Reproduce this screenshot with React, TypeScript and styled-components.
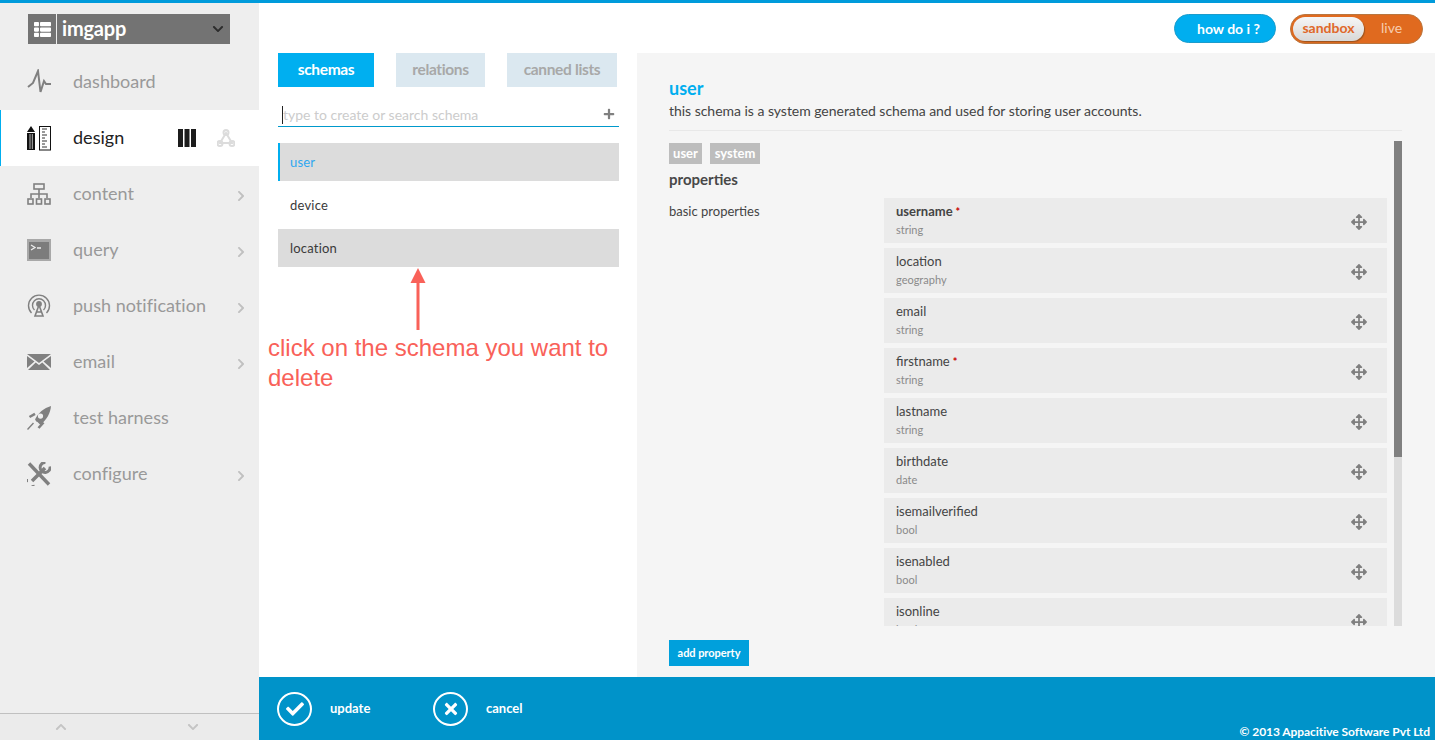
import React from "react";
import styled, { createGlobalStyle } from "styled-components";
import { FaThList, FaChevronDown, FaChevronRight, FaChevronUp, FaPlus, FaArrowsAlt, FaCheck, FaTimes } from "react-icons/fa";

const Global = createGlobalStyle`
  html, body { margin: 0; padding: 0; background: #fff; }
  * { box-sizing: border-box; }
  body { font-family: Lato, "Open Sans", sans-serif; }
`;

const Page = styled.div`
  width: 1435px; height: 740px; overflow: hidden;
  display: flex; flex-direction: column;
  border-top: 3px solid #009bdb;
`;
const Body = styled.div`flex: 1; display: flex; min-height: 0;`;

const Sidebar = styled.aside`
  width: 259px; background: #eeeeee; display: flex; flex-direction: column;
  padding-top: 11px;
`;
const AppSwitch = styled.div`
  margin-left: 28px; width: 202px; height: 30px; background: #737373; display: flex; align-items: center; color: #fff;
  flex: none;
`;
const AppIcon = styled.div`
  width: 29px; height: 100%; display: flex; align-items: center; justify-content: center; font-size: 17px;
  border-right: 1px solid #eee;
`;
const AppName = styled.div`flex: 1; padding: 0 0 2px 5px; font-size: 20px; font-weight: 700; line-height: 26px; letter-spacing: -0.2px;`;
const AppCaret = styled.div`width: 18px; color: #2c2c2c; font-size: 12px; display: flex; align-items: center;`;

const Nav = styled.nav`flex: 1; padding-top: 10px;`;
const NavRow = styled.div<{ $active?: boolean }>`
  height: 56px; display: flex; align-items: center; position: relative;
  padding-left: ${p => (p.$active ? 26 : 27)}px;
  background: ${p => (p.$active ? "#fff" : "transparent")};
  border-left: ${p => (p.$active ? "1px solid #00aeef" : "none")};
  color: ${p => (p.$active ? "#222" : "#999")};
`;
const NavIcon = styled.div`
  width: 24px; height: 26px; flex: none; display: flex; align-items: center; justify-content: center;
`;
const NavLabel = styled.div`flex: 1; margin-left: 22px; padding-bottom: 2px; font-size: 18px; line-height: 24px; letter-spacing: 0.03px;`;
const NavArrow = styled.div`width: 24px; flex: none; color: #c0c0c0; font-size: 12px; display: flex; padding-top: 4px;`;
const DesignTools = styled.div`display: flex; align-items: center; gap: 21px; margin-right: 24px;`;

const SideFoot = styled.div`
  height: 27px; border-top: 1px solid #c0c0c0; background: #ebebeb; flex: none;
  display: grid; grid-template-columns: 122px 142px; color: #c4c4c4; font-size: 12px;
  align-items: center; justify-items: center;
`;

const Main = styled.main`flex: 1; display: flex; flex-direction: column; min-width: 0;`;
const TopBar = styled.header`
  height: 50px; flex: none; display: flex; justify-content: flex-end; align-items: flex-start;
  padding: 11px 12px 0 0; gap: 14px;
`;
const HelpPill = styled.div`
  width: 102px; height: 29px; border-radius: 15px; background: #00aeef; border: 1px solid #1b9ccc;
  color: #fff; font-weight: 700; font-size: 14px; line-height: 27px; padding-left: 22px;
`;
const EnvToggle = styled.div`
  width: 133px; height: 30px; border-radius: 15px; background: #e06a1f; border: 1px solid #b9763f;
  display: flex; align-items: center; padding-left: 2px;
`;
const EnvKnob = styled.div`
  width: 71px; height: 24px; border-radius: 12px; background: linear-gradient(#f6f6f6, #d8d8d8);
  box-shadow: 1px 1px 1px #9a5420;
  color: #e0682a; font-weight: 700; font-size: 14px; line-height: 22px; text-align: center;
`;
const EnvOff = styled.div`margin-left: 17px; padding-bottom: 3px; color: #f7cdb0; font-size: 14px;`;

const Content = styled.div`flex: 1; display: flex; min-height: 0;`;
const LeftCol = styled.section`width: 378px; padding-left: 19px; position: relative; flex: none;`;
const Tabs = styled.div`display: flex; gap: 22px;`;
const Tab = styled.div<{ $active?: boolean; $w: number }>`
  width: ${p => p.$w}px; height: 34px; text-align: center; line-height: 33px;
  font-size: 15.5px; font-weight: 700; letter-spacing: -0.35px;
  background: ${p => (p.$active ? "#00aff0" : "#dbe8f0")};
  color: ${p => (p.$active ? "#fff" : "#a8a8a8")};
`;
const SearchBox = styled.div`
  margin-top: 17px; width: 341px; height: 23px; position: relative; display: flex; align-items: center;
  border-bottom: 1px solid #0099cc;
`;
const SearchInput = styled.input`
  flex: 1; border: 0; outline: 0; background: transparent; padding: 0 0 2px 5px; height: 22px; min-width: 0;
  font-family: Lato, sans-serif; font-size: 14px; color: #333;
  &::placeholder { color: #cccccc; opacity: 1; }
`;
const Caret = styled.span`position: absolute; left: 4px; top: 2px; width: 1px; height: 18px; background: #222;`;
const PlusBtn = styled.div`color: #808080; font-size: 12px; width: 16px; padding-bottom: 2px; display: flex;`;
const SchemaList = styled.div`margin-top: 16px; width: 341px; display: flex; flex-direction: column; gap: 5px;`;
const SchemaRow = styled.div<{ $shade?: boolean; $active?: boolean }>`
  height: 38px; line-height: 38px; font-size: 13px; letter-spacing: 0.2px; padding-left: ${p => (p.$active ? 10 : 12)}px;
  background: ${p => (p.$shade ? "#dcdcdc" : "transparent")};
  color: ${p => (p.$active ? "#2ea7f0" : "#3a3a3a")};
  border-left: ${p => (p.$active ? "2px solid #00aeef" : "none")};
`;
const Callout = styled.div`position: absolute; left: 9px; top: 215px; width: 350px;`;
const CalloutArrow = styled.div`position: absolute; left: 142px; top: 0; width: 16px; height: 62px;`;
const CalloutText = styled.div`
  margin-top: 65px; font-family: "Liberation Sans", Arial, sans-serif; font-size: 24px; line-height: 30px; color: #f96159;
`;

const Panel = styled.section`flex: 1; background: #f5f5f5; padding: 23px 33px 11px 32px; display: flex; flex-direction: column; min-width: 0;`;
const PanelTitle = styled.h1`margin: 0; font-size: 18px; line-height: 24px; font-weight: 700; color: #00aeef;`;
const PanelDesc = styled.p`margin: 1px 0 0; font-size: 14px; line-height: 20px; color: #444; letter-spacing: -0.03px;`;
const Rule = styled.div`height: 1px; background: #e8e8e8; margin-top: 9px; flex: none;`;
const ScrollArea = styled.div`height: 485px; margin-top: 10px; display: flex; gap: 7px; overflow: hidden; flex: none;`;
const ScrollInner = styled.div`flex: 1; padding-top: 2px; min-width: 0;`;
const Track = styled.div`width: 8px; background: #dcdcdc; flex: none;`;
const Thumb = styled.div`height: 316px; background: #808080;`;
const Chips = styled.div`display: flex; gap: 8px;`;
const Chip = styled.span<{ $w: number }>`
  width: ${p => p.$w}px; height: 21px; line-height: 21px; text-align: center; background: #bdbdbd; color: #fff; font-weight: 700; font-size: 13px;
`;
const SectionHead = styled.h2`margin: 3px 0 0; font-size: 15px; line-height: 24px; font-weight: 700; color: #484848;`;
const PropsGrid = styled.div`display: flex; margin-top: 7px;`;
const PropsLabel = styled.div`width: 215px; flex: none; font-size: 13px; line-height: 26px; color: #444;`;
const PropsList = styled.div`width: 503px; display: flex; flex-direction: column; gap: 5px;`;
const PropRow = styled.div`
  height: 45px; background: #ebebeb; padding: 4px 20px 0 12px; display: flex; align-items: center; flex: none;
`;
const PropText = styled.div`flex: 1; align-self: flex-start;`;
const PropName = styled.div<{ $bold?: boolean }>`font-size: 13px; line-height: 19px; color: #444; font-weight: ${p => (p.$bold ? 700 : 400)};`;
const Req = styled.span`color: #c80000; font-size: 11px; font-weight: 700; line-height: 0; margin-left: 3px;`;
const PropType = styled.div`font-size: 11px; line-height: 16px; margin-top: 1px; color: #8a8a8a;`;
const MoveHandle = styled.div`color: #7f7f7f; font-size: 16px; display: flex; margin-top: -1px;`;
const AddBtn = styled.button`
  margin-top: 14px; width: 80px; height: 26px; border: 0; background: #00a0dc; color: #fff; font-family: Lato, sans-serif;
  font-size: 11px; font-weight: 700; padding: 0 0 2px; flex: none; letter-spacing: -0.05px;
`;

const Footer = styled.footer`
  height: 63px; flex: none; background: #0093c9; color: #fff; display: flex; align-items: center; padding-left: 18px; position: relative;
`;
const FootAction = styled.div<{ $w: number }>`width: ${p => p.$w}px; display: flex; align-items: center; gap: 18px; font-size: 13px; font-weight: 700; margin-top: 1px;`;
const FootLabel = styled.span`padding-bottom: 3px;`;
const Circle = styled.div`
  width: 35px; height: 34px; border-radius: 50%; border: 2px solid #fff; display: flex; align-items: center; justify-content: center; font-size: 18px;
`;
const Copyright = styled.div`position: absolute; right: 5px; bottom: 1px; font-size: 12px; font-weight: 700; letter-spacing: -0.06px;`;

const Pulse = () => (
  <svg width="24" height="26" viewBox="0 0 24 26" fill="none" stroke="#808080" strokeWidth="2">
    <path d="M1 18 L6 14 L11 2 L13.5 23 L17 12 L19 15 L24 15" />
  </svg>
);
const DesignIcon = () => (
  <svg width="24" height="25" viewBox="0 0 24 25">
    <path d="M4 0 L8 6 L0 6 Z M0 7 H8 V24 H0 Z" fill="#111" />
    <path d="M3 8 V23 M5.3 8 V23" stroke="#fff" strokeWidth="0.7" />
    <rect x="12.5" y="0.5" width="11" height="23.5" fill="#fff" stroke="#111" />
    <path d="M15 3 H20 M15 6 H18 M15 9 H20 M15 12 H18 M15 15 H20 M15 18 H18 M15 21 H20" stroke="#333" strokeWidth="1" />
  </svg>
);
const Bars = () => (
  <svg width="18" height="18" viewBox="0 0 18 18" fill="#1c1c1c">
    <rect x="0" width="5" height="18" /><rect x="6.5" width="5" height="18" /><rect x="13" width="5" height="18" />
  </svg>
);
const Graph = () => (
  <svg width="18" height="18" viewBox="0 0 18 18" fill="none" stroke="#dcdcdc" strokeWidth="2">
    <path d="M9 4 L3 14 H15 Z" /><circle cx="9" cy="3.5" r="2.5" /><circle cx="3" cy="14.5" r="2.5" /><circle cx="15" cy="14.5" r="2.5" />
  </svg>
);
const Tree = () => (
  <svg width="24" height="23" viewBox="0 0 24 23" fill="none" stroke="#808080" strokeWidth="1.6">
    <rect x="7" y="1" width="10" height="5" /><path d="M12 6 V15 M4 15 V11 H20 V15" />
    <rect x="1" y="16" width="5" height="5" /><rect x="9.5" y="16" width="5" height="5" /><rect x="18" y="16" width="5" height="5" />
  </svg>
);
const Terminal = () => (
  <svg width="24" height="22" viewBox="0 0 24 22">
    <rect x="0" y="0" width="24" height="22" fill="#a8a8a8" />
    <rect x="2" y="3" width="20" height="17" fill="#7c7c7c" />
    <path d="M4 6 L8 8.5 L4 11" fill="none" stroke="#eee" strokeWidth="1.3" /><path d="M10 9 H14" stroke="#eee" strokeWidth="1.5" />
  </svg>
);
const Antenna = () => (
  <svg width="24" height="24" viewBox="0 0 24 24" fill="none" stroke="#808080" strokeWidth="1.4">
    <path d="M4.5 19 A10.5 10.5 0 1 1 19.5 19" /><path d="M7.5 16 A6.5 6.5 0 1 1 16.5 16" />
    <circle cx="12" cy="10" r="2.2" fill="#808080" /><path d="M12 11 L8 22 H16 Z M9.5 18 H14.5" strokeWidth="1.6" />
  </svg>
);
const Envelope = () => (
  <svg width="24" height="16" viewBox="0 0 24 16" fill="#808080">
    <path d="M0 0 H24 L12 9 Z" /><path d="M0 2 L7.5 7.5 L0 14 Z M24 2 L16.5 7.5 L24 14 Z" /><path d="M1 16 L8.7 8.6 L12 11 L15.3 8.6 L23 16 Z" />
  </svg>
);
const Rocket = () => (
  <svg width="24" height="25" viewBox="0 0 24 25" fill="none">
    <path fillRule="evenodd" fill="#808080" d="M24 0 C23.5 7 20 13 13.5 19 L8 13.5 C11 7 17 2 24 0 Z M13.5 7.5 A2.6 2.6 0 1 0 13.51 12.7 A2.6 2.6 0 1 0 13.5 7.5 Z" />
    <path d="M2.5 11 L8 7.8 M11.5 22 L16.5 16.5" stroke="#808080" strokeWidth="2.6" />
    <path d="M0.5 23.5 L6.5 17 M9 14 L10.5 15.5" stroke="#808080" strokeWidth="1.4" />
  </svg>
);
const Tools = () => (
  <svg width="24" height="24" viewBox="0 0 24 24" fill="none" stroke="#808080">
    <path d="M2 1.5 L22 22.5" strokeWidth="3.4" />
    <path d="M5 19 L18 6" strokeWidth="3.6" />
    <path d="M23 4.5 A5 5 0 1 1 18.5 0.5" strokeWidth="3" />
    <path d="M1 18.5 A5 5 0 1 0 6 23" strokeWidth="3" />
  </svg>
);
const Arrow = () => (
  <svg width="16" height="62" viewBox="0 0 16 62" style={{ display: "block" }}>
    <path d="M8 0 L15.5 15 H0.5 Z" fill="#f96159" /><rect x="6.5" y="14" width="3" height="48" fill="#f96159" />
  </svg>
);

const nav = [
  { label: "dashboard", icon: <Pulse /> },
  { label: "design", icon: <DesignIcon />, active: true },
  { label: "content", icon: <Tree />, more: true },
  { label: "query", icon: <Terminal />, more: true },
  { label: "push notification", icon: <Antenna />, more: true },
  { label: "email", icon: <Envelope />, more: true },
  { label: "test harness", icon: <Rocket /> },
  { label: "configure", icon: <Tools />, more: true },
];

const props: [string, string, boolean?, boolean?][] = [
  ["username", "string", true, true],
  ["location", "geography"],
  ["email", "string"],
  ["firstname", "string", false, true],
  ["lastname", "string"],
  ["birthdate", "date"],
  ["isemailverified", "bool"],
  ["isenabled", "bool"],
  ["isonline", "bool"],
];

export default function App() {
  return (
    <Page>
      <Global />
      <Body>
        <Sidebar>
          <AppSwitch>
            <AppIcon><FaThList /></AppIcon>
            <AppName>imgapp</AppName>
            <AppCaret><FaChevronDown /></AppCaret>
          </AppSwitch>
          <Nav>
            {nav.map(n => (
              <NavRow key={n.label} $active={n.active}>
                <NavIcon>{n.icon}</NavIcon>
                <NavLabel>{n.label}</NavLabel>
                {n.active && <DesignTools><Bars /><Graph /></DesignTools>}
                {n.more && <NavArrow><FaChevronRight /></NavArrow>}
              </NavRow>
            ))}
          </Nav>
          <SideFoot><FaChevronUp /><FaChevronDown /></SideFoot>
        </Sidebar>
        <Main>
          <TopBar>
            <HelpPill>how do i ?</HelpPill>
            <EnvToggle>
              <EnvKnob>sandbox</EnvKnob>
              <EnvOff>live</EnvOff>
            </EnvToggle>
          </TopBar>
          <Content>
            <LeftCol>
              <Tabs>
                <Tab $active $w={96}>schemas</Tab>
                <Tab $w={89}>relations</Tab>
                <Tab $w={110}>canned lists</Tab>
              </Tabs>
              <SearchBox>
                <Caret />
                <SearchInput placeholder="type to create or search schema" readOnly />
                <PlusBtn><FaPlus /></PlusBtn>
              </SearchBox>
              <SchemaList>
                <SchemaRow $shade $active>user</SchemaRow>
                <SchemaRow>device</SchemaRow>
                <SchemaRow $shade>location</SchemaRow>
              </SchemaList>
              <Callout>
                <CalloutArrow><Arrow /></CalloutArrow>
                <CalloutText>click on the schema you want to delete</CalloutText>
              </Callout>
            </LeftCol>
            <Panel>
              <PanelTitle>user</PanelTitle>
              <PanelDesc>this schema is a system generated schema and used for storing user accounts.</PanelDesc>
              <Rule />
              <ScrollArea>
                <ScrollInner>
                  <Chips><Chip $w={33}>user</Chip><Chip $w={50}>system</Chip></Chips>
                  <SectionHead>properties</SectionHead>
                  <PropsGrid>
                    <PropsLabel>basic properties</PropsLabel>
                    <PropsList>
                      {props.map(([name, type, bold, req]) => (
                        <PropRow key={name}>
                          <PropText>
                            <PropName $bold={bold}>{name}{req && <Req>*</Req>}</PropName>
                            <PropType>{type}</PropType>
                          </PropText>
                          <MoveHandle><FaArrowsAlt /></MoveHandle>
                        </PropRow>
                      ))}
                    </PropsList>
                  </PropsGrid>
                </ScrollInner>
                <Track><Thumb /></Track>
              </ScrollArea>
              <AddBtn>add property</AddBtn>
            </Panel>
          </Content>
          <Footer>
            <FootAction $w={156}><Circle><FaCheck /></Circle><FootLabel>update</FootLabel></FootAction>
            <FootAction $w={150}><Circle><FaTimes /></Circle><FootLabel>cancel</FootLabel></FootAction>
            <Copyright>© 2013 Appacitive Software Pvt Ltd</Copyright>
          </Footer>
        </Main>
      </Body>
    </Page>
  );
}
